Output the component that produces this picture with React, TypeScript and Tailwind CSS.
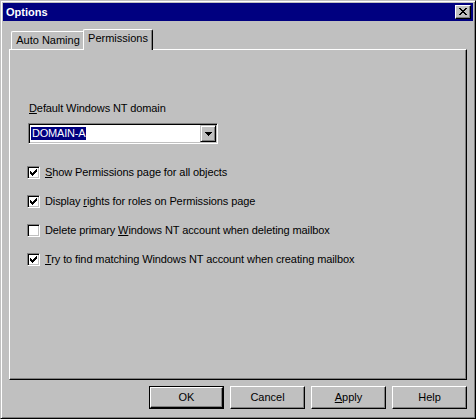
import React from "react";

const FONT = { fontFamily: '"Liberation Sans", Arial, sans-serif' };

function CloseGlyph() {
  const rows = ["XX....XX", ".XX..XX.", "..XXXX..", "...XX...", "..XXXX..", ".XX..XX.", "XX....XX"];
  return (
    <svg width="8" height="7" viewBox="0 0 8 7" shapeRendering="crispEdges">
      {rows.flatMap((r, y) =>
        r.split("").map((c, x) => (c === "X" ? <rect key={`${x}-${y}`} x={x} y={y} width="1" height="1" fill="#000" /> : null))
      )}
    </svg>
  );
}

function CheckGlyph() {
  const rows = ["......X", ".....XX", "X...XXX", "XX.XXX.", "XXXXX..", ".XXX...", "..X...."];
  return (
    <svg width="7" height="7" viewBox="0 0 7 7" shapeRendering="crispEdges">
      {rows.flatMap((r, y) =>
        r.split("").map((c, x) => (c === "X" ? <rect key={`${x}-${y}`} x={x} y={y} width="1" height="1" fill="#000" /> : null))
      )}
    </svg>
  );
}

function Arrow() {
  return (
    <svg width="7" height="4" viewBox="0 0 7 4" shapeRendering="crispEdges">
      <rect x="0" y="0" width="7" height="1" fill="#000" />
      <rect x="1" y="1" width="5" height="1" fill="#000" />
      <rect x="2" y="2" width="3" height="1" fill="#000" />
      <rect x="3" y="3" width="1" height="1" fill="#000" />
    </svg>
  );
}

function Checkbox({ checked, children }: { checked: boolean; children: React.ReactNode }) {
  return (
    <div className="flex items-center h-[13px]">
      <div className="w-[13px] h-[13px] shrink-0 bg-white border border-t-[#808080] border-l-[#808080] border-r-white border-b-white shadow-[inset_1px_1px_0_#000,inset_-1px_-1px_0_#c0c0c0] flex items-center justify-center">
        {checked && <CheckGlyph />}
      </div>
      <span className="ml-[5px] text-[11px] leading-[13px] tracking-[-0.1px] text-black whitespace-nowrap">{children}</span>
    </div>
  );
}

function Button({ children, isDefault }: { children: React.ReactNode; isDefault?: boolean }) {
  if (isDefault) {
    return (
      <div className="w-[75px] h-[23px] border border-black">
        <div className="w-full h-full border border-t-white border-l-white border-r-black border-b-black shadow-[inset_-1px_-1px_0_#808080] flex items-center justify-center text-[11px] leading-[13px] text-black">
          {children}
        </div>
      </div>
    );
  }
  return (
    <div className="w-[75px] h-[23px] border border-t-white border-l-white border-r-black border-b-black shadow-[inset_-1px_-1px_0_#808080] flex items-center justify-center text-[11px] leading-[13px] text-black">
      {children}
    </div>
  );
}

export default function App() {
  return (
    <div style={FONT} className="w-[476px] h-[419px] bg-[#c0c0c0] border border-t-[#c0c0c0] border-l-[#c0c0c0] border-r-black border-b-black shadow-[inset_1px_1px_0_#fff,inset_-1px_-1px_0_#808080] p-[2px] flex flex-col">
      {/* Title bar */}
      <div className="h-[18px] bg-[#000080] flex items-center justify-between pl-[3px] pr-[2px]">
        <span className="text-white font-bold text-[11px] leading-[13px]">Options</span>
        <div className="w-[16px] h-[14px] bg-[#c0c0c0] border border-t-white border-l-white border-r-black border-b-black shadow-[inset_-1px_-1px_0_#808080] flex items-center justify-center">
          <div className="mt-[-1px] ml-[-1px]">
            <CloseGlyph />
          </div>
        </div>
      </div>

      {/* Body */}
      <div className="flex-1 flex flex-col px-[6px] pt-[8px]">
        {/* Tabs */}
        <div className="h-[20px] flex items-end pl-[2px]">
          <div className="w-[74px] h-[18px] border-t border-l border-r border-t-white border-l-white border-r-black shadow-[inset_-1px_0_0_#808080] rounded-tl-[2px] rounded-tr-[2px] pt-[2px] text-center text-[11px] leading-[13px] text-black">
            Auto Naming
          </div>
          <div className="relative z-10 w-[70px] h-[21px] ml-[-2px] mb-[-1px] bg-[#c0c0c0] border-t border-l border-r border-t-white border-l-white border-r-black shadow-[inset_-1px_0_0_#808080] rounded-tl-[2px] rounded-tr-[2px] pt-[2px] text-center text-[11px] leading-[13px] text-black">
            Permissions
          </div>
        </div>

        {/* Panel */}
        <div className="h-[331px] border border-t-white border-l-white border-r-black border-b-black shadow-[inset_-1px_-1px_0_#808080] flex flex-col pl-[18px] pt-[52px]">
          <div className="ml-[1px] h-[13px] text-[11px] leading-[13px] tracking-[-0.1px] text-black">
            <u>D</u>efault Windows NT domain
          </div>
          <div className="mt-[8px] w-[190px] h-[21px] bg-white border border-t-[#808080] border-l-[#808080] border-r-white border-b-white shadow-[inset_1px_1px_0_#000,inset_-1px_-1px_0_#c0c0c0] flex items-center p-[1px]">
            <div className="flex-1 flex items-center pl-[1px]">
              <span className="bg-[#000080] text-white text-[11px] leading-[13px] tracking-[-0.2px] px-[1px]">DOMAIN-A</span>
            </div>
            <div className="w-[16px] h-[17px] bg-[#c0c0c0] border border-t-[#c0c0c0] border-l-[#c0c0c0] border-r-black border-b-black shadow-[inset_1px_1px_0_#fff,inset_-1px_-1px_0_#808080] flex items-center justify-center">
              <Arrow />
            </div>
          </div>

          <div className="mt-[22px] flex flex-col gap-[16px] ml-[-1px]">
            <Checkbox checked>
              <u>S</u>how Permissions page for all objects
            </Checkbox>
            <Checkbox checked>
              Display <u>r</u>ights for roles on Permissions page
            </Checkbox>
            <Checkbox checked={false}>
              Delete primary <u>W</u>indows NT account when deleting mailbox
            </Checkbox>
            <Checkbox checked>
              <u>T</u>ry to find matching Windows NT account when creating mailbox
            </Checkbox>
          </div>
        </div>

        {/* Buttons */}
        <div className="mt-[6px] flex justify-end gap-[6px] pr-[0px]">
          <Button isDefault>OK</Button>
          <Button>Cancel</Button>
          <Button>
            <u>A</u>pply
          </Button>
          <Button>Help</Button>
        </div>
      </div>
    </div>
  );
}
